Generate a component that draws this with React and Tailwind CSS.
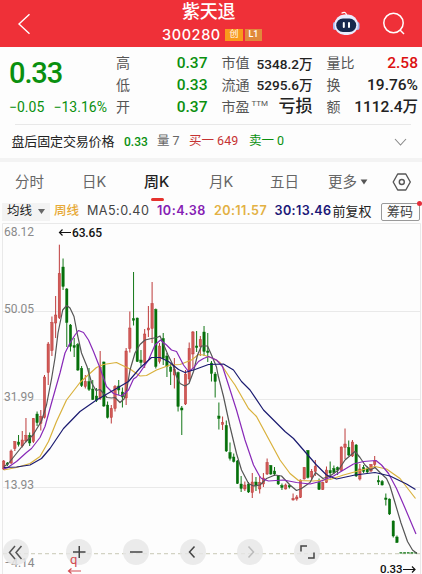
import React from "react";

const RED = "#b93030";
const GREEN = "#06700b";

// Each candle: [up (1) or down (0), high, body top, body bottom, low]
const candles = [
  [1, 460, 461, 469, 470], [0, 462, 463, 464.5, 466], [1, 449.5, 451, 463, 464],
  [1, 441, 441.7, 448.5, 451], [0, 435, 442, 444.5, 446.5], [1, 431, 440, 446, 447.5],
  [1, 418, 435.5, 441, 442.5], [0, 432.5, 435.5, 443, 446], [1, 418, 418.5, 441.5, 443],
  [0, 411.5, 414, 422.7, 426], [1, 410, 416.5, 423.5, 430.5], [1, 375, 377, 417.5, 418.5],
  [1, 342, 344, 372.5, 385], [1, 316.5, 322.5, 350.5, 356], [1, 296, 315, 323, 338],
  [1, 244.7, 273.5, 317.7, 319], [0, 258.5, 267, 286.5, 290], [0, 288, 289, 322.5, 347],
  [0, 324, 325, 346.5, 351.5], [0, 338, 345.5, 347.5, 357], [0, 343, 344.5, 370, 371],
  [0, 366, 368.5, 385.5, 387], [1, 375, 381.5, 386.5, 388.5], [0, 368, 381.5, 389.5, 391],
  [0, 380, 389, 399.5, 400], [0, 388, 396, 400.5, 402], [1, 351, 367, 398.5, 400],
  [0, 361.5, 362, 406, 407], [0, 401.5, 405, 417.5, 418.5], [1, 405, 408.5, 417.5, 423.5],
  [1, 385, 386.5, 408.5, 411.5], [0, 380, 386, 390, 395], [0, 387.5, 392, 397, 407.5],
  [1, 348, 351, 398, 405], [1, 311.5, 328, 348.5, 352.5], [0, 272, 318.7, 320.3, 325.5],
  [0, 317.7, 318, 361.5, 362], [0, 350, 360, 362.5, 366.5], [1, 329, 334, 362.5, 368],
  [1, 306, 328, 330, 337], [1, 282, 303.5, 328.5, 343], [0, 308.5, 309.5, 366.5, 368.5],
  [1, 343, 346, 361.5, 363.5], [0, 333, 338.5, 358.5, 365], [0, 353, 356, 366.5, 377],
  [0, 364, 367, 371.5, 385], [1, 358, 369, 375, 388.5], [0, 371.5, 372.5, 406.5, 411.5],
  [0, 406, 408, 410, 435], [1, 370, 374, 404, 405], [1, 342.5, 348.5, 379, 382],
  [1, 331, 332, 354, 368], [0, 331, 346, 347.5, 352], [1, 336, 339.5, 346.5, 356],
  [0, 326, 332, 351.5, 356], [0, 333, 351, 352.5, 362], [0, 361, 363, 373.5, 381.5],
  [0, 372, 374, 381.5, 397.5], [0, 402.5, 416, 418.5, 429.5], [1, 416.5, 422.5, 424.5, 430],
  [0, 420.5, 425.5, 451, 452], [0, 442.5, 452.5, 458.5, 460.5], [0, 453.5, 457, 461.5, 462.5],
  [0, 460, 461, 483.5, 484], [0, 476, 484, 488.5, 492], [1, 481.5, 485, 489, 491],
  [0, 482, 484, 492, 493], [1, 473, 482, 492.5, 498], [0, 477, 482, 486, 491],
  [1, 476, 482.5, 489, 493.5], [1, 473, 478, 484, 487], [1, 458.5, 462.5, 474, 475],
  [0, 465, 465.5, 474, 475], [0, 467, 471, 474, 476], [0, 475, 475.5, 484, 485],
  [0, 483.5, 485.5, 487.5, 490], [1, 483.5, 485, 489, 489.5], [0, 484, 485.5, 487, 488.5],
  [1, 493.5, 498.5, 500, 500.5], [1, 495, 497, 499, 500.7], [1, 479.5, 480, 497.5, 498],
  [1, 467, 467.5, 479, 479.5], [0, 450, 450.5, 477.5, 478.5], [1, 469, 471.5, 477, 480],
  [1, 460, 466.5, 471.5, 476], [0, 478.5, 482.5, 489.5, 490], [1, 481.5, 482.5, 489.5, 490],
  [1, 466.5, 470, 482.5, 483], [0, 461.5, 470.5, 473, 478.5], [0, 465.5, 468.5, 472.5, 474],
  [0, 466.5, 467.5, 470, 475], [1, 446.5, 447, 470.5, 471], [1, 428.5, 444, 447.5, 459],
  [0, 440.5, 447.5, 455, 456], [1, 440, 442, 456, 457], [0, 444, 445, 476, 477],
  [1, 464, 469, 479, 480.5], [0, 465, 467.5, 471.5, 473], [0, 466.5, 469, 472, 473.5],
  [1, 464, 464.5, 471, 472], [1, 456, 461, 464.5, 468], [0, 475.5, 480.5, 482, 485],
  [0, 480, 481.5, 485, 485.5], [0, 493.5, 498, 499.5, 505.5], [0, 498.5, 499, 514, 515],
  [0, 520.5, 521, 536, 537.5], [0, 535.5, 537, 542.5, 543],
];

const averages = [
  ["#d9b13c", "3.7,470 16.5,467.5 30,463.5 40,456.5 48.5,441.5 56.5,421.5 66.5,400 80,382.5 86.5,376.5 96.5,367.5 103.5,364.5 116.5,362.5 120,364.2 130,369 140,376 146.5,375.5 156.5,370 170,365 180,364.5 191.5,360 198.5,354.5 203.5,355 213.5,358.5 220,362.5 230,378 235,385 248.5,408.5 256.5,416.5 266.5,435 280,460 290,473.5 298.5,480.5 313.5,481 330,479.5 343.5,475 360,470.5 375,466.5 386.5,469 400,478.5 415.5,498.5"],
  ["#555555", "3.7,466.5 8,464 26,441.5 33,435 41.5,421 46.5,405 51.7,378 55,358 58,333 62.7,310 66.7,305.5 70,308 74,316.5 77.5,335 81.5,353 87,366.5 91.7,383 96,390.5 100,389.5 107,397.5 111.5,398 115,397.5 120,402.5 124,399 126.7,390 130,370 135,353 140,344.5 145,340 151.5,338.5 157,337.5 160,336 163,343 168,355 173,365 176.5,376.5 180,383.5 185,386 189,383.5 193.5,371.5 197.5,355 201.5,346 207.5,346 211.5,355 216.5,367 218,375 223.5,396.5 230,426.5 236.5,453.5 241.5,470 248.5,483.5 253.5,486 260,485 266.5,478.5 275,475 281.5,476 290,485 296.5,490.5 301.5,488.5 310,482.5 315.5,472.5 323,478.5 330,476 338.5,470 345,460 355,451.5 360,457.5 365,465 370.5,470 375,467.5 380,472.5 386.5,478.5 390,486 394.5,501 401,523 407.5,541.5 412.5,550 417,553.5"],
  ["#8829b8", "3.7,469 7,468 16.5,461.5 26.5,452.5 31.5,448.5 40,437.5 45,426.5 51.5,403 60,373 65,353 70,343 75,335 78.5,330.5 83.5,332.5 88.5,340 93.5,351.5 100,368 106.5,386.5 113.5,393.5 121.5,396 128.5,390 133.5,379 136.5,377 140,372.5 148.5,360 155,345 160.5,340 166.5,345 171.5,350 176.5,351.5 183.5,365 188.5,371.5 193.5,368 198.5,361.5 203.5,358.5 208.5,356.5 216.5,360 222.5,366.5 228.5,385 236.5,410 245,440 253.5,465 259.5,476 261.5,478.5 268.5,481 283.5,480 296.5,482.5 310,484 320,481.5 333.5,476 343.5,470 353.5,464 363.5,461.5 376,460.5 381.5,465 388.5,473.5 396.5,488.5 405,508 416,534"],
  ["#1b1b70", "3.7,467.5 16.5,467 30,465 41.5,458.5 50,448.5 63.5,428.5 80,411.5 96.5,400 116.5,388.5 128.5,381.5 140,368 151.5,357.5 160,357.5 168.5,361.5 178.5,369.5 185,372.5 195,369.5 208.5,364.5 223.5,364 233.5,370 241.5,381.5 250,390 263.5,410 285,431.5 293.5,438.5 306.5,453.5 316.5,465 326.5,475 336.5,479 355,475 375,472.5 390,476 406.5,484 415.5,489.5"],
];

function Header() {
  return (
    <header className="flex h-[47px] items-center bg-[#ef3038] text-white">
      <div className="w-[130px] pl-[17px]">
        <svg width="14" height="22" viewBox="0 0 14 22" fill="none" stroke="#fff" strokeWidth="1.4">
          <path d="M12.5 1.2 2 11l10.5 9.8" />
        </svg>
      </div>
      <div className="flex w-[163px] flex-col pb-px pl-[32px]">
        <div className="pl-[20px] text-[18px] leading-[23px] tracking-[-0.3px] font-medium">紫天退</div>
        <div className="flex h-[23px] items-center">
          <span className="w-[63px] font-['Inter',sans-serif] text-[14.5px] font-medium tracking-[0.6px]">300280</span>
          <span className="flex h-[12px] w-[18px] items-center justify-center bg-[#f99a1c] text-[9px]">创</span>
          <span className="ml-[2px] flex h-[12px] w-[17px] items-center justify-center bg-[#e0893b] text-[9px] font-medium">L1</span>
        </div>
      </div>
      <div className="flex flex-1 items-center pl-[39px]">
        <svg width="29" height="27" viewBox="0 0 29 27">
          <path d="M9.5 3.2q4.5-2.4 5 2" fill="none" stroke="#fff" strokeWidth="1.3" />
          <rect x="1" y="12" width="4" height="8" rx="2" fill="#a9b7f0" />
          <rect x="23.5" y="12" width="4" height="8" rx="2" fill="#a9b7f0" />
          <rect x="2.5" y="4.5" width="23.5" height="20.5" rx="10" fill="#e9edff" />
          <rect x="4.2" y="8.5" width="20" height="13.5" rx="6.7" fill="#17284d" />
          <path d="M11.8 13v4M17 13v4" stroke="#fff" strokeWidth="2" strokeLinecap="round" />
        </svg>
        <svg className="ml-[21px]" width="24" height="24" viewBox="0 0 24 24" fill="none" stroke="#fff" strokeWidth="1.5">
          <circle cx="11.5" cy="11" r="9.7" />
          <path d="m18 18 4 4" />
        </svg>
      </div>
    </header>
  );
}

function Stat({ label, sup, value, color = "text-[#222]", size = "text-[14px]" }) {
  return (
    <div className="flex h-[21.7px] items-center justify-between whitespace-nowrap">
      <span className="text-[14px] text-[#555]">
        {label}
        {sup && <span className="relative -top-[6px] ml-[2px] text-[8px]">{sup}</span>}
      </span>
      <span className={`font-medium ${color} ${size}`}>{value}</span>
    </div>
  );
}

function Quote() {
  return (
    <section className="flex h-[77px] pt-[6px]">
      <div className="w-[116px] pl-[9px] text-[#0a900f]">
        <div className="mt-[3px] h-[32px] text-[29px] font-medium leading-[34px] tracking-[-1.1px]">0.33</div>
        <div className="mt-[9px] flex text-[14px] leading-[20px]">
          <span className="w-[44.5px]">−0.05</span>
          <span>−13.16%</span>
        </div>
      </div>
      <div className="w-[91.5px]">
        <Stat label="高" value="0.37" color="text-[#0a900f]" size="text-[15.5px]" />
        <Stat label="低" value="0.33" color="text-[#0a900f]" size="text-[15.5px]" />
        <Stat label="开" value="0.37" color="text-[#0a900f]" size="text-[15.5px]" />
      </div>
      <div className="ml-[14px] w-[91px]">
        <Stat label="市值" value="5348.2万" size="text-[13.6px]" />
        <Stat label="流通" value="5295.6万" size="text-[13.6px]" />
        <Stat label="市盈" sup="TTM" value="亏损" size="text-[17px]" />
      </div>
      <div className="ml-[14px] w-[91.5px]">
        <Stat label="量比" value="2.58" color="text-[#dc1010]" size="text-[15.5px]" />
        <Stat label="换" value="19.76%" size="text-[15.5px]" />
        <Stat label="额" value="1112.4万" size="text-[15.5px]" />
      </div>
    </section>
  );
}

function AfterHours() {
  return (
    <section className="flex h-[33px] items-center whitespace-nowrap text-[12.5px]">
      <span className="w-[112px] pl-[11.5px] text-[13px] tracking-[-0.15px] text-[#222]">盘后固定交易价格</span>
      <span className="ml-[12px] w-[33px] text-[12px] font-medium text-[#0a900f]">0.33</span>
      <span className="w-[32px] text-[#666]">量 7</span>
      <span className="w-[60px] text-[#c63333]">买一 649</span>
      <span className="w-[145px] text-[#0a900f]">卖一 0</span>
      <svg width="13" height="8" viewBox="0 0 13 8" fill="none" stroke="#888" strokeWidth="1.1">
        <path d="m1 1 5.5 6L12 1" />
      </svg>
    </section>
  );
}

function Tabs() {
  return (
    <nav className="flex h-[40px] items-center font-['Inter','Noto_Sans_CJK_SC',sans-serif] text-[14.5px] text-[#666]">
      <span className="w-[66px] pl-[15px]">分时</span>
      <span className="w-[63px] pl-[16px]">日K</span>
      <span className="relative w-[64px] pl-[15px] text-[15px] font-medium text-[#222]">
        周K
        <span className="absolute -bottom-[8px] left-[22px] h-[3px] w-[13px] rounded-full bg-[#e5322d]" />
      </span>
      <span className="w-[62px] pl-[16px]">月K</span>
      <span className="w-[60px] pl-[15px]">五日</span>
      <span className="flex w-[77px] items-center pl-[13px]">
        更多
        <svg className="ml-[3px]" width="8" height="6" viewBox="0 0 8 6"><path d="M.6.5h6.8L4 5.5z" fill="#555" /></svg>
      </span>
      <svg width="20" height="18" viewBox="0 0 20 18" fill="none" stroke="#555" strokeWidth="1.4" strokeLinejoin="round">
        <path d="M5.7 1h8.1l4.5 8-4.5 8H5.7L1.2 9z" />
        <circle cx="9.8" cy="9" r="2.5" />
      </svg>
    </nav>
  );
}

function AverageBar() {
  return (
    <div className="flex h-[19px] items-center whitespace-nowrap font-['Inter','Noto_Sans_CJK_SC',sans-serif] text-[12.5px]">
      <span className="ml-[2px] flex h-[18px] w-[48px] items-center bg-[#f3f3f3] pl-[5px] text-[#222]">
        均线
        <svg className="ml-[6px]" width="7" height="5" viewBox="0 0 7 5"><path d="M0 0h7L3.5 5z" fill="#666" /></svg>
      </span>
      <span className="w-[37px] pl-[4px] font-medium text-[#e7a936]">周线</span>
      <span className="w-[70px] text-[12.6px] tracking-[0.45px] text-[#444]">MA5:0.40</span>
      <span className="w-[57px] text-[12.6px] font-semibold tracking-[0.5px] text-[#8520b3]">10:4.38</span>
      <span className="w-[60.5px] text-[12.6px] font-semibold tracking-[0.4px] text-[#e3b143]">20:11.57</span>
      <span className="w-[58px] text-[12.6px] font-semibold tracking-[0.4px] text-[#1b1777]">30:13.46</span>
      <span className="w-[48px] text-[13px] text-[#222]">前复权</span>
      <span className="relative flex h-[18px] w-[39px] items-center justify-center rounded-[2px] border border-[#999] text-[13px] text-[#444]">
        筹码
        <span className="absolute -right-[3px] -top-[3px] size-[5px] rounded-full bg-[#e52d3a]" />
      </span>
    </div>
  );
}

const controls = [
  { x: "M12 7 6.5 13.5 12 20M18.500 7 13 13.500l5.500 6.500", color: "#555" },
  { x: "M7 13h12.500M13.250 7v12", color: "#444" },
  { x: "M7 13h12.500", color: "#444" },
  { x: "M14.500 7.500 9.500 13l5 5.500", color: "#444" },
  { x: "M11.500 7.500 16.500 13l-5 5.500", color: "#bbb" },
  { x: "M7 12.500V7h6M14 19h6v-5.500", color: "#444" },
];

function Chart() {
  return (
    <section className="relative h-[353px]">
      <svg className="block font-['Roboto',sans-serif]" width="422" height="353" viewBox="0 221 422 353">
        <g stroke="#e9e9e9" fill="none">
          <path d="M2.500 574V223.500H420.500V574M3 311.500H420M3 399.500H420M3 487.500H420" />
        </g>
        <path d="M3 553.700H420" stroke="#d3d3c4" strokeWidth="1.300" strokeDasharray="4 3" />
        {candles.map(([up, high, top, bottom, low], i) => {
          const x = 3.7 + i * 3.71;
          const color = up ? RED : GREEN;
          return (
            <g key={i}>
              <path d={`M${x} ${high}V${low}`} stroke={color} strokeWidth="0.95" />
              <rect x={x - 1.2} y={top} width="2.400" height={Math.max(bottom - top, 1.3)}
                fill={up ? "#d05a57" : GREEN} stroke={color} strokeWidth="0.4" />
            </g>
          );
        })}
        <path d="M399.500 552.800H417" stroke={GREEN} strokeWidth="1.300" strokeDasharray="2.700 1" />
        {averages.map(([color, points]) => (
          <polyline key={color} points={points} fill="none" stroke={color} strokeWidth="1.200" strokeLinejoin="round" />
        ))}
        <g fill="#8a8a8a" fontSize="12">
          <text x="4" y="235.500" textLength="30">68.12</text>
          <text x="4" y="313" textLength="30">50.05</text>
          <text x="4" y="401" textLength="30">31.99</text>
          <text x="4" y="489" textLength="30">13.93</text>
          <text x="4.500" y="567" textLength="30">−4.14</text>
        </g>
        <g fill="none" stroke="#111" strokeWidth="1.200">
          <path d="M71 232.500H59.500M62.500 229.500l-3 3 3 3" />
          <path d="M403 569.500h12M412 566.500l3 3-3 3" />
        </g>
        <text x="72" y="237" fontSize="12" fontWeight="500" fill="#111" textLength="30">63.65</text>
        <text x="380" y="573.300" fontSize="11.500" fontWeight="500" fill="#111" textLength="22.500">0.33</text>
      </svg>
      <div className="absolute left-[3px] top-[318px] flex">
        {controls.map(({ x, color }, i) => (
          <svg key={i} className={i === 1 ? "ml-[36.500px]" : i > 1 ? "ml-[31px]" : ""} width="26" height="26" viewBox="0 0 26 26">
            <circle cx="13" cy="13" r="13" fill="#e7e7e7" fillOpacity="0.820" />
            <path d={x} fill="none" stroke={color} strokeWidth="1.500" />
          </svg>
        ))}
      </div>
      <svg className="absolute left-[67px] top-[333px] overflow-visible" width="16" height="20" viewBox="0 0 16 20">
        <text x="3" y="9.500" fontSize="13" fill="#d34b52" className="font-['Roboto',sans-serif]">q</text>
        <path d="M14 17H2M4.500 14.500 1.500 17l3 2.500" fill="none" stroke="#d34b52" strokeWidth="1.200" />
      </svg>
    </section>
  );
}

export default function App() {
  return (
    <main className="h-[574px] w-[422px] overflow-hidden bg-[#fdfdfd] font-['Roboto','Noto_Sans_CJK_SC',sans-serif]">
      <Header />
      <Quote />
      <div className="ml-[15px] mr-[11px] h-px bg-[#e8e8e8]" />
      <AfterHours />
      <div className="h-[4px] bg-[#f3f3f3]" />
      <Tabs />
      <AverageBar />
      <Chart />
    </main>
  );
}
